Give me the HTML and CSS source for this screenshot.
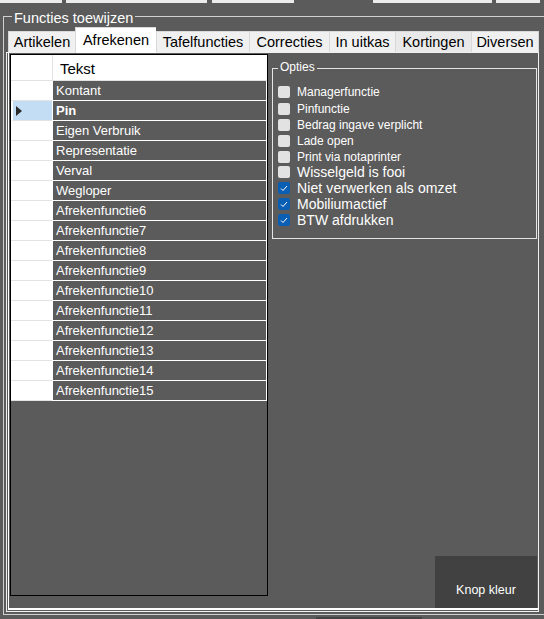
FILE: index.html
```html
<!DOCTYPE html>
<html>
<head>
<meta charset="utf-8">
<link rel="stylesheet" href="styles.css">
</head>
<body>
<div class="topbar">
  <div class="seg w62"></div>
  <div class="seg w141"></div>
  <div class="seg w82"></div>
  <div class="seg w119"></div>
  <div class="seg w48"></div>
</div>
<div class="group">
  <div class="group-legend">Functies toewijzen</div>
  <div class="tabs">
    <div class="tab t-art">Artikelen</div>
    <div class="tab t-afr sel">Afrekenen</div>
    <div class="tab t-taf">Tafelfuncties</div>
    <div class="tab t-cor">Correcties</div>
    <div class="tab t-uit">In uitkas</div>
    <div class="tab t-kor hover">Kortingen</div>
    <div class="tab t-div last">Diversen</div>
  </div>
  <div class="page">
    <div class="page-inner">
      <div class="grid">
        <div class="ghead"><div class="grh"></div><div class="hc">Tekst</div></div>
        <div class="row"><div class="rh"></div><div class="cell">Kontant</div></div>
        <div class="row"><div class="rh cur"><svg class="arrow" width="6" height="10" viewBox="0 0 6 10"><polygon points="0,0 6,5 0,10" fill="#2b2b2b"/></svg></div><div class="cell bold">Pin</div></div>
        <div class="row"><div class="rh"></div><div class="cell">Eigen Verbruik</div></div>
        <div class="row"><div class="rh"></div><div class="cell">Representatie</div></div>
        <div class="row"><div class="rh"></div><div class="cell">Verval</div></div>
        <div class="row"><div class="rh"></div><div class="cell">Wegloper</div></div>
        <div class="row"><div class="rh"></div><div class="cell">Afrekenfunctie6</div></div>
        <div class="row"><div class="rh"></div><div class="cell">Afrekenfunctie7</div></div>
        <div class="row"><div class="rh"></div><div class="cell">Afrekenfunctie8</div></div>
        <div class="row"><div class="rh"></div><div class="cell">Afrekenfunctie9</div></div>
        <div class="row"><div class="rh"></div><div class="cell">Afrekenfunctie10</div></div>
        <div class="row"><div class="rh"></div><div class="cell">Afrekenfunctie11</div></div>
        <div class="row"><div class="rh"></div><div class="cell">Afrekenfunctie12</div></div>
        <div class="row"><div class="rh"></div><div class="cell">Afrekenfunctie13</div></div>
        <div class="row"><div class="rh"></div><div class="cell">Afrekenfunctie14</div></div>
        <div class="row"><div class="rh"></div><div class="cell">Afrekenfunctie15</div></div>
      </div>
      <div class="right">
        <div class="opties">
          <div class="opties-legend">Opties</div>
          <div class="opt h17"><span class="cb"></span><span class="s12">Managerfunctie</span></div>
          <div class="opt h17"><span class="cb"></span><span class="s12">Pinfunctie</span></div>
          <div class="opt h16"><span class="cb"></span><span class="s12">Bedrag ingave verplicht</span></div>
          <div class="opt h16"><span class="cb"></span><span class="s12">Lade open</span></div>
          <div class="opt h15"><span class="cb"></span><span class="s12">Print via notaprinter</span></div>
          <div class="opt h16"><span class="cb"></span><span class="s14">Wisselgeld is fooi</span></div>
          <div class="opt h16"><span class="cb on"><svg width="12" height="12" viewBox="0 0 12 12"><polyline points="3,6.5 5,8.5 9,4" fill="none" stroke="#fff" stroke-width="1"/></svg></span><span class="s14 wide">Niet verwerken als omzet</span></div>
          <div class="opt h16"><span class="cb on"><svg width="12" height="12" viewBox="0 0 12 12"><polyline points="3,6.5 5,8.5 9,4" fill="none" stroke="#fff" stroke-width="1"/></svg></span><span class="s14">Mobiliumactief</span></div>
          <div class="opt h16"><span class="cb on"><svg width="12" height="12" viewBox="0 0 12 12"><polyline points="3,6.5 5,8.5 9,4" fill="none" stroke="#fff" stroke-width="1"/></svg></span><span class="s14">BTW afdrukken</span></div>
        </div>
        <div class="btn">Knop kleur</div>
      </div>
    </div>
  </div>
</div>
<div class="bottombar"></div>
</body>
</html>
```

FILE: styles.css
```css
* { box-sizing: border-box; }
html, body { margin: 0; padding: 0; }
body {
  width: 544px;
  height: 619px;
  overflow: hidden;
  background: #5b5b5b;
  font-family: "Liberation Sans", Arial, sans-serif;
}

.topbar { display: flex; height: 3px; gap: 4px; }
.seg { height: 3px; background: #ebebeb; flex: none; }
.w62 { width: 62px; }
.w141 { width: 141px; }
.w82 { width: 82px; margin-left: 1px; }
.w119 { width: 119px; margin-left: 75px; }
.w48 { width: 44px; }

.group {
  position: relative;
  margin: 13px 0 0 3px;
  width: 541px;
  height: 599px;
  border: 1px solid #d0d0d0;
  border-right: none;
}
.group-legend {
  position: absolute;
  left: 8px;
  top: -7px;
  padding: 0 2px;
  background: #5b5b5b;
  color: #fff;
  font-size: 14.5px;
  line-height: 17px;
}

.tabs {
  display: flex;
  align-items: flex-end;
  margin: 10px 0 0 4px;
  height: 25px;
}
.tab {
  height: 21px;
  background: #f0f0f0;
  border-top: 1px solid #d9d9d9;
  border-left: 1px solid #d9d9d9;
  color: #000;
  font-size: 14.5px;
  line-height: 20px;
  text-align: center;
  flex: none;
}
.tab.last { border-right: 1px solid #d9d9d9; }
.tab.sel {
  position: relative;
  z-index: 2;
  height: 26px;
  margin-bottom: -1px;
  background: #fff;
  line-height: 24px;
}
.tab.hover { background: #e9e9e9; }
.t-art { width: 67px; }
.t-afr { width: 81px; }
.t-taf { width: 93px; }
.t-cor { width: 80px; }
.t-uit { width: 66px; }
.t-kor { width: 76px; }
.t-div { width: 68px; }

.page {
  margin-left: 2px;
  width: 533px;
  height: 560px;
  border: 1px solid #f0f0f0;
}
.page-inner {
  margin-left: 1px;
  height: 557px;
  border-left: 1px solid #fff;
  border-bottom: 2px solid #fff;
  display: flex;
}

.grid {
  margin: 1px 0 0 1px;
  width: 258px;
  height: 542px;
  border: 1px solid #000;
  flex: none;
}
.ghead { display: flex; height: 26px; }
.grh {
  width: 41px;
  background: #fff;
  border-bottom: 1px solid #e2e2e2;
}
.hc {
  width: 215px;
  background: #fff;
  border-left: 1px solid #e2e2e2;
  border-bottom: 1px solid #e2e2e2;
  color: #000;
  font-size: 15px;
  line-height: 23px;
  padding: 2px 0 0 7px;
}
.row { display: flex; height: 20px; }
.rh {
  width: 41px;
  background: #fff;
  border-bottom: 1px solid #e3e3e3;
  display: flex;
  align-items: center;
}
.rh.cur {
  background: #c3def4;
  border-left: 2px solid #fff;
}
.arrow { margin-left: 3px; }
.cell {
  width: 215px;
  border-left: 1px solid #fff;
  border-right: 1px solid #fff;
  border-bottom: 1px solid #fff;
  color: #fff;
  font-size: 13px;
  line-height: 19px;
  padding-left: 3px;
  white-space: nowrap;
}
.cell.bold { font-weight: bold; }

.right {
  flex: 1;
  display: flex;
  flex-direction: column;
  margin: 0 1px 0 4px;
}
.opties {
  position: relative;
  margin-top: 15px;
  height: 171px;
  border: 1px solid #e4e4e4;
  padding: 14px 0 0 5px;
}
.opties-legend {
  position: absolute;
  left: 5px;
  top: -9px;
  padding: 0 2px;
  background: #5b5b5b;
  color: #fff;
  font-size: 12px;
  line-height: 15px;
}
.opt { display: flex; align-items: center; color: #fff; white-space: nowrap; }
.h17 { height: 17px; }
.h16 { height: 16px; }
.h15 { height: 15px; }
.cb {
  width: 12px;
  height: 12px;
  border-radius: 2px;
  background: #e2e2e2;
  margin-right: 7px;
  flex: none;
  display: block;
}
.cb svg { display: block; }
.cb.on { background: #0a5fb4; }
.s12 { font-size: 12px; }
.s14 { font-size: 14px; }
.wide { letter-spacing: 0.1px; }

.btn {
  margin-top: auto;
  align-self: flex-end;
  width: 102px;
  height: 52px;
  background: #414141;
  color: #fff;
  font-size: 12.5px;
  display: flex;
  align-items: center;
  justify-content: center;
  padding-top: 16px;
}

.bottombar {
  margin: 2px 0 0 316px;
  width: 106px;
  height: 2px;
  background: #444;
}
```
